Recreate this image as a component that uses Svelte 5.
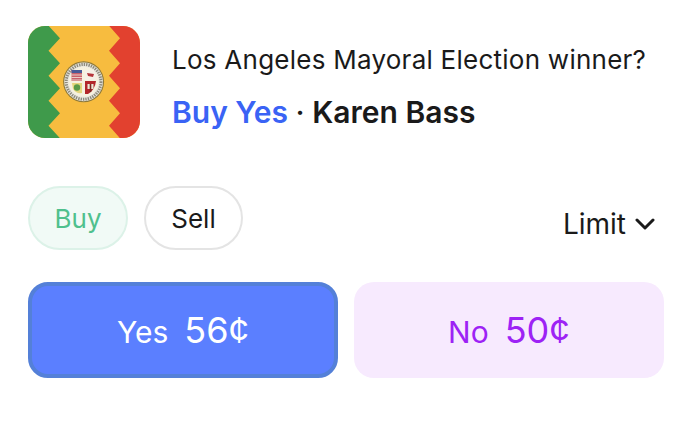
<script>
  const z = (a, b) => {
    const p = [];
    for (let i = 0; i < 10; i++) p.push(`${i % 2 ? b : a},${-0.3 + i * 12.5}`);
    return p.join(' ');
  };
  const green = `0,0 ${z(20.5, 32)} 32,112 0,112`;
  const red = `112,0 ${z(81, 92)} 81,112 112,112`;
</script>

<div class="card">
  <header class="head">
    <svg class="logo" viewBox="0 0 112 112" width="112" height="112">
      <defs>
        <clipPath id="rr"><rect width="112" height="112" rx="17" /></clipPath>
        <filter id="soft" x="-10%" y="-10%" width="120%" height="120%"><feGaussianBlur stdDeviation="0.35" /></filter>
      </defs>
      <g clip-path="url(#rr)">
        <rect width="112" height="112" fill="#f7bc3f" />
        <polygon points={green} fill="#3f9a4b" />
        <polygon points={red} fill="#e2412f" />
        <g filter="url(#soft)">
          <circle cx="55.6" cy="55.8" r="20.5" fill="#8f7a3a" />
          <circle cx="55.6" cy="55.8" r="19.4" fill="#e8e6de" />
          <circle cx="55.6" cy="55.8" r="17.4" fill="none" stroke="#8d8a7c" stroke-width="3" stroke-dasharray="1.4 1" />
          <circle cx="55.6" cy="55.8" r="15" fill="#f6f1df" />
          <rect x="43.5" y="44" width="10.5" height="11" fill="#c9606a" />
          <rect x="43.5" y="44" width="10.5" height="3" fill="#4a5a96" />
          <path d="M43.5 49h10.5M43.5 51.5h10.5M43.5 54h10.5" stroke="#f2ece0" stroke-width=".8" />
          <path d="M57 44 H66 Q68 49 68 54 H57 Z" fill="#f5f0e6" />
          <path d="M59 47 L66 48 L65 51 L60 50 Z" fill="#b5343a" />
          <path d="M44 57 H54 V67 Q48 68 45 63 Z" fill="#e4d67e" />
          <circle cx="49" cy="61.5" r="3.2" fill="#5a9a4a" />
          <path d="M57 55 H68 Q67 64 60 68 H57 Z" fill="#b3262c" />
          <path d="M59.5 58 H65.5 V63 H59.5 Z" fill="#ece6d4" />
          <path d="M61.7 58 H63.3 V66 H61.7 Z" fill="#7a2a24" />
        </g>
      </g>
    </svg>
    <div class="info">
      <p class="title">Los Angeles Mayoral Election winner?</p>
      <p class="sub"><span class="action">Buy Yes</span>{' '}<span class="dot">·</span>{' '}<span class="name">Karen Bass</span></p>
    </div>
  </header>

  <div class="controls">
    <div class="pills">
      <button class="pill buy">Buy</button>
      <button class="pill sell">Sell</button>
    </div>
    <button class="limit">
      Limit
      <svg viewBox="0 0 20 12" width="20" height="12"><path d="M2 2 L10 10 L18 2" fill="none" stroke="#1a1a1a" stroke-width="3" stroke-linecap="round" stroke-linejoin="round" /></svg>
    </button>
  </div>

  <div class="outcomes">
    <button class="outcome yes"><span class="pair"><span class="lab">Yes</span><span class="price">56¢</span></span></button>
    <button class="outcome no"><span class="pair"><span class="lab">No</span><span class="price">50¢</span></span></button>
  </div>
</div>

<style>
  :global(body) { margin: 0; background: #fff; }
  .card {
    width: 692px;
    height: 422px;
    box-sizing: border-box;
    padding: 26px 28px 0;
    font-family: Inter, "Liberation Sans", sans-serif;
    color: #1a1a1a;
    display: flex;
    flex-direction: column;
  }
  button { font-family: inherit; cursor: pointer; padding: 0; margin: 0; }
  .head { display: flex; gap: 32px; align-items: center; height: 112px; }
  .logo { display: block; flex: none; }
  .info { display: flex; flex-direction: column; gap: 18px; margin-top: 9px; }
  p { margin: 0; }
  .title { font-size: 26px; line-height: 32px; letter-spacing: 0.25px; white-space: nowrap; }
  .sub { font-size: 30px; line-height: 36px; font-weight: 600; white-space: nowrap; }
  .action { color: #3a63f5; }
  .dot { font-weight: 500; }
  .controls { display: flex; justify-content: space-between; align-items: center; margin-top: 48px; height: 64px; }
  .pills { display: flex; gap: 16px; }
  .pill { height: 64px; border-radius: 32px; font-size: 26px; border: 2px solid; box-sizing: border-box; }
  .buy { width: 100px; background: #f1faf6; border-color: #dcf2e8; color: #4fc08d; }
  .sell { width: 99px; background: #fff; border-color: #e4e4e4; color: #1a1a1a; }
  .limit { display: flex; align-items: center; gap: 9px; background: none; border: 0; font-size: 28px; color: #1a1a1a; margin-right: 9px; margin-top: 11px; }
  .outcomes { display: flex; gap: 16px; margin-top: 32px; }
  .outcome { width: 310px; height: 96px; border-radius: 20px; display: flex; align-items: center; justify-content: center; box-sizing: border-box; border: 0; }
  .pair { display: flex; align-items: baseline; gap: 16px; }
  .yes { background: #5b7fff; color: #fff; border: 4px solid #5480d8; }
  .no { background: #f7eafe; color: #9d22f5; }
  .lab { font-size: 30px; line-height: 36px; }
  .price { font-size: 36px; line-height: 44px; }
</style>
